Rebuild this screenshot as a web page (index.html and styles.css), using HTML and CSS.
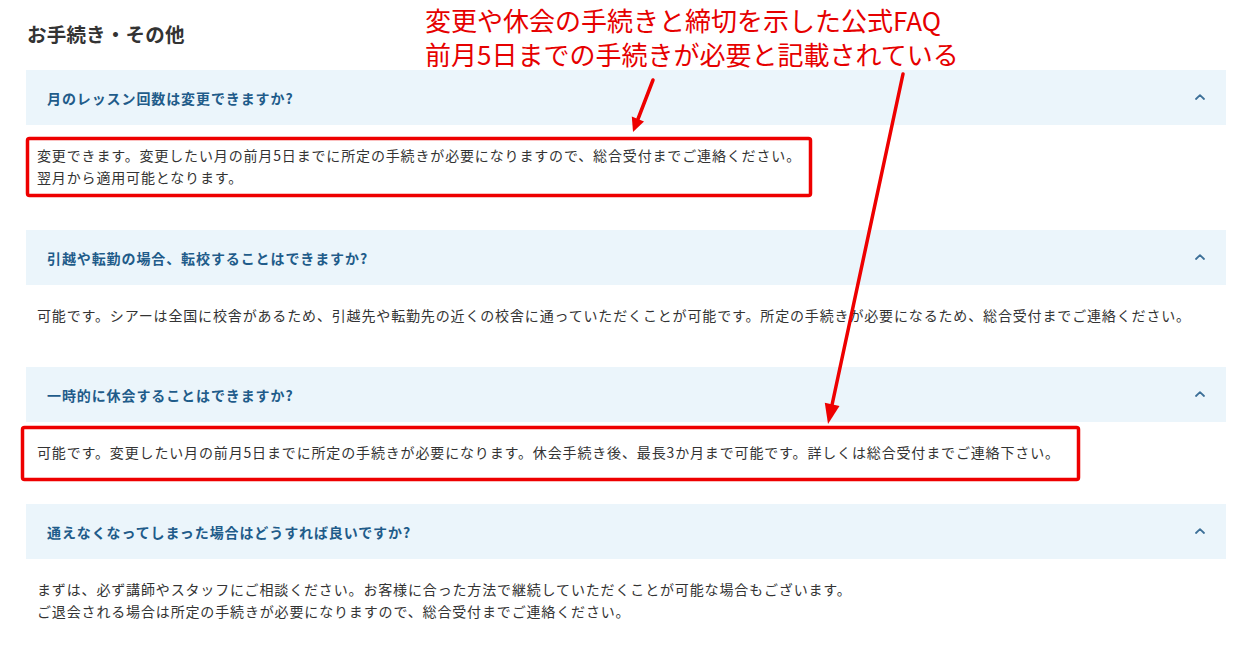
FILE: index.html
```html
<!DOCTYPE html>
<html lang="ja">
<head>
<meta charset="utf-8">
<title>お手続き・その他</title>
<link rel="stylesheet" href="styles.css">
</head>
<body>
<main class="faq">
  <h2 class="faq-title">お手続き・その他</h2>

  <section class="faq-item">
    <div class="faq-q">
      <span>月のレッスン回数は変更できますか?</span>
      <svg class="chev" viewBox="0 0 10 6" width="10" height="6"><path d="M1 5 L5 1.2 L9 5" fill="none" stroke="#3d7098" stroke-width="1.8" stroke-linecap="round" stroke-linejoin="round"/></svg>
    </div>
    <div class="faq-a">
      <p>変更できます。変更したい月の前月5日までに所定の手続きが必要になりますので、総合受付までご連絡ください。</p>
      <p>翌月から適用可能となります。</p>
    </div>
  </section>

  <section class="faq-item">
    <div class="faq-q">
      <span>引越や転勤の場合、転校することはできますか?</span>
      <svg class="chev" viewBox="0 0 10 6" width="10" height="6"><path d="M1 5 L5 1.2 L9 5" fill="none" stroke="#3d7098" stroke-width="1.8" stroke-linecap="round" stroke-linejoin="round"/></svg>
    </div>
    <div class="faq-a">
      <p>可能です。シアーは全国に校舎があるため、引越先や転勤先の近くの校舎に通っていただくことが可能です。所定の手続きが必要になるため、総合受付までご連絡ください。</p>
    </div>
  </section>

  <section class="faq-item">
    <div class="faq-q">
      <span>一時的に休会することはできますか?</span>
      <svg class="chev" viewBox="0 0 10 6" width="10" height="6"><path d="M1 5 L5 1.2 L9 5" fill="none" stroke="#3d7098" stroke-width="1.8" stroke-linecap="round" stroke-linejoin="round"/></svg>
    </div>
    <div class="faq-a">
      <p>可能です。変更したい月の前月5日までに所定の手続きが必要になります。休会手続き後、最長3か月まで可能です。詳しくは総合受付までご連絡下さい。</p>
    </div>
  </section>

  <section class="faq-item">
    <div class="faq-q">
      <span>通えなくなってしまった場合はどうすれば良いですか?</span>
      <svg class="chev" viewBox="0 0 10 6" width="10" height="6"><path d="M1 5 L5 1.2 L9 5" fill="none" stroke="#3d7098" stroke-width="1.8" stroke-linecap="round" stroke-linejoin="round"/></svg>
    </div>
    <div class="faq-a">
      <p>まずは、必ず講師やスタッフにご相談ください。お客様に合った方法で継続していただくことが可能な場合もございます。</p>
      <p>ご退会される場合は所定の手続きが必要になりますので、総合受付までご連絡ください。</p>
    </div>
  </section>
</main>

<div class="note">
  <p>変更や休会の手続きと締切を示した公式FAQ</p>
  <p>前月5日までの手続きが必要と記載されている</p>
</div>

<svg class="marks" width="1250" height="659" viewBox="0 0 1250 659">
  <rect x="27.5" y="138.5" width="783" height="57" rx="2" fill="none" stroke="#ee0000" stroke-width="3.5"/>
  <rect x="22.5" y="427.5" width="1056" height="52" rx="2" fill="none" stroke="#ee0000" stroke-width="3.5"/>
  <line x1="653" y1="80" x2="638" y2="119" stroke="#ee0000" stroke-width="3.5" stroke-linecap="round"/>
  <polygon points="633,132 644,121.5 631.8,116.5" fill="#ee0000"/>
  <line x1="903" y1="74" x2="832" y2="405" stroke="#ee0000" stroke-width="3.5" stroke-linecap="round"/>
  <polygon points="828,424 839.5,406 824.8,402.8" fill="#ee0000"/>
</svg>
</body>
</html>
```

FILE: styles.css
```css
html, body {
  margin: 0;
  padding: 0;
  background: #ffffff;
}

body {
  font-family: "Noto Sans CJK JP", "Noto Sans", sans-serif;
  color: #333333;
  position: relative;
  width: 1250px;
  height: 659px;
  overflow: hidden;
}

.faq {
  width: 1200px;
  padding: 20px 0 0 26px;
}

.faq-title {
  margin: 0 0 22px 1px;
  font-size: 19.5px;
  line-height: 28px;
  font-weight: 700;
  color: #333333;
  letter-spacing: 0.2px;
}

.faq-item {
  margin-bottom: 23px;
}

.faq-item:first-of-type {
  margin-bottom: 24px;
}

.faq-q {
  height: 55px;
  display: flex;
  align-items: center;
  justify-content: space-between;
  padding: 0 21px;
  background: #ebf5fb;
  font-size: 14px;
  font-weight: 700;
  letter-spacing: 0.9px;
  color: #1f5c8a;
}

.chev {
  display: block;
  margin-top: -2px;
}

.faq-a {
  padding: 19px 11px 18px;
  font-size: 14px;
  line-height: 22px;
  letter-spacing: 0.85px;
  color: #333333;
}

.faq-a p {
  margin: 0;
}

.note {
  position: absolute;
  left: 425px;
  top: 3px;
  color: #e60000;
  font-size: 26px;
  line-height: 34px;
  white-space: nowrap;
}

.note p {
  margin: 0;
}

.marks {
  position: absolute;
  left: 0;
  top: 0;
  pointer-events: none;
}
```
